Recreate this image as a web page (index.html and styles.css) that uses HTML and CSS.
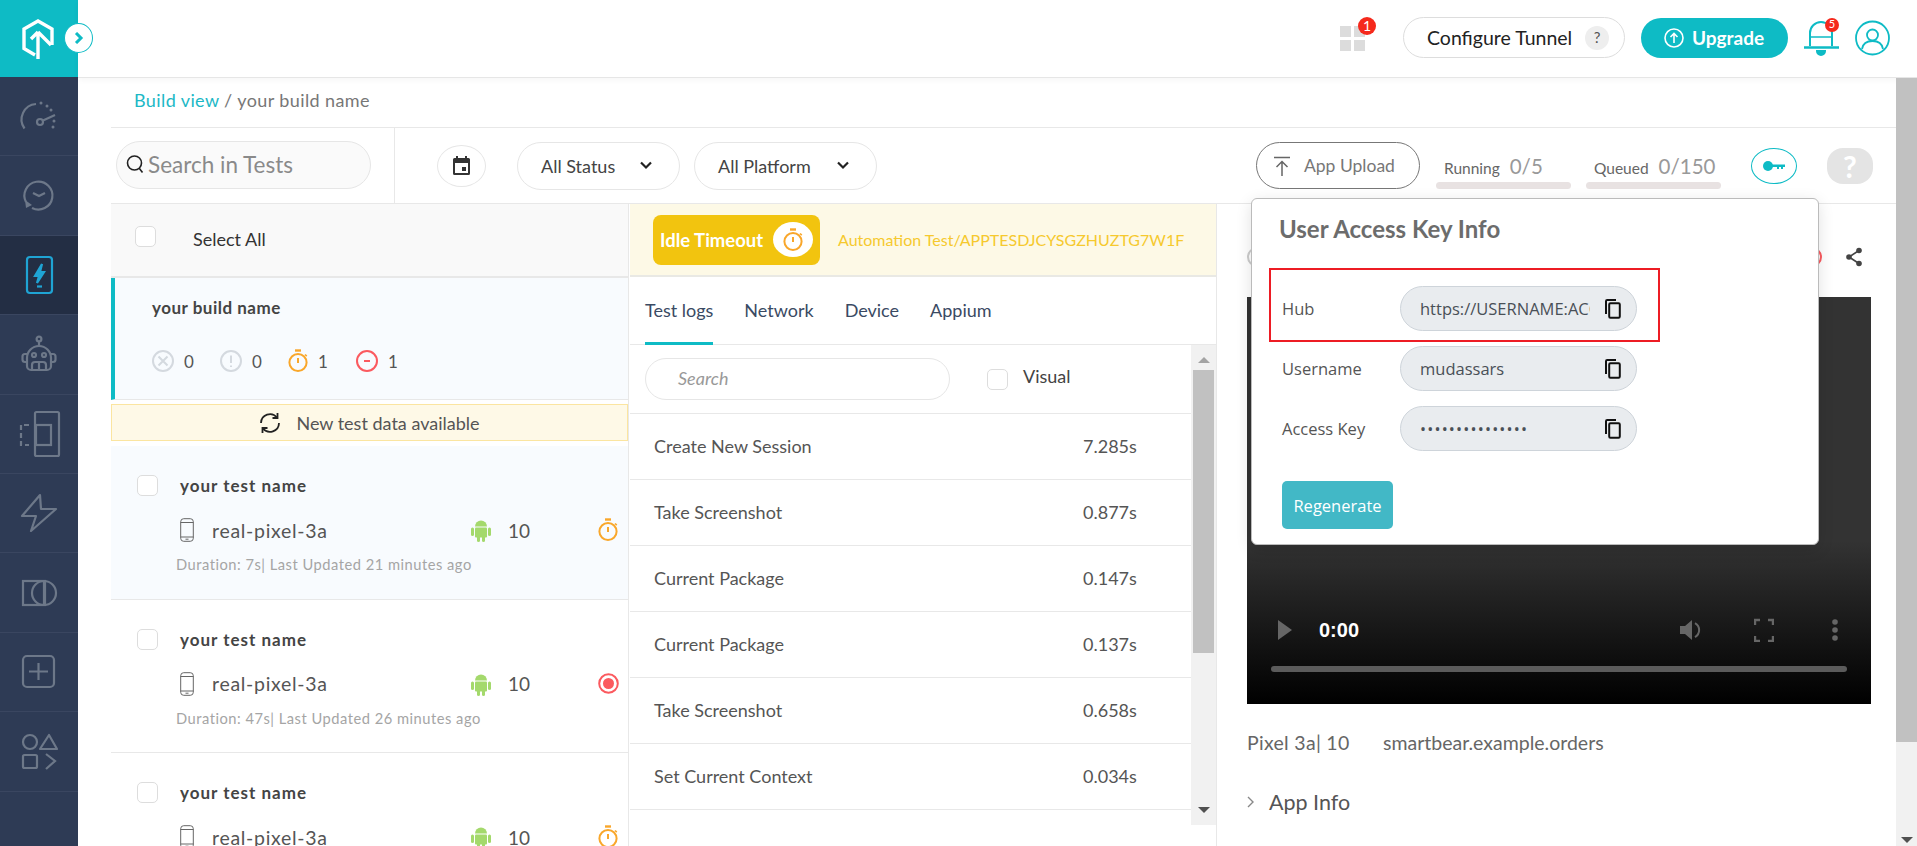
FILE: index.html
```html
<!DOCTYPE html>
<html lang="en">
<head>
    <meta charset="UTF-8">
    <meta name="viewport" content="width=device-width, initial-scale=1.0">
    <title>App Automation - Build view</title>
    <link rel="stylesheet" href="styles.css">
</head>
<body>
    <svg class="defs" width="0" height="0">
        <symbol id="i-timer" viewBox="0 0 20 24">
            <path d="M7 1.500h6" stroke-width="2.400"/>
            <circle cx="10" cy="13.500" r="8.600"/>
            <path d="M10 9v5" stroke-width="2"/>
            <path d="M17 5.500l1.800 1.600" stroke-width="1.600"/>
        </symbol>
        <symbol id="i-phone" viewBox="0 0 14 24">
            <rect x=".7" y=".7" width="12.600" height="22.600" rx="3"/>
            <path d="M.7 4.500h12.600M.7 19h12.600M5.500 21.200h3"/>
        </symbol>
        <symbol id="i-android" viewBox="0 0 20 24">
            <path d="M4 8.500a6 6 0 0 1 12 0z"/>
            <rect x="4" y="9.500" width="12" height="10" rx="1"/>
            <rect x="0" y="9.500" width="3" height="8.500" rx="1.500"/>
            <rect x="17" y="9.500" width="3" height="8.500" rx="1.500"/>
            <rect x="6" y="17" width="3" height="7" rx="1.500"/>
            <rect x="11" y="17" width="3" height="7" rx="1.500"/>
        </symbol>
        <symbol id="i-copy" viewBox="0 0 16 20">
            <path d="M1 15V2.200C1 1.500 1.500 1 2.200 1H11" />
            <rect x="4.200" y="4.200" width="10.600" height="14.600" rx="1.200"/>
        </symbol>
    </svg>

    <div class="app">
        <aside class="sidebar">
            <div class="side-logo">
                <svg width="34" height="42" viewBox="0 0 34 42" fill="none" stroke="#fff" stroke-width="3.400">
                    <path d="M14 37L3 30.500V11L17 3l14 8v16"/>
                    <path d="M17 41V14M17 14l-7 7M17 14l13 13"/>
                </svg>
            </div>
            <div class="side-item">
                <svg class="side-icon" viewBox="0 0 40 40">
                    <path d="M5.500 32.500A15.500 15.500 0 0 1 17 8"/>
                    <circle cx="21" cy="26" r="3"/>
                    <path d="M24 24.500l12-5.500"/>
                    <path class="dots" d="M22 7v.1M28 10v.1M32 14v.1M35 25v.1M34 31v.1"/>
                </svg>
            </div>
            <div class="side-item">
                <svg class="side-icon" viewBox="0 0 40 40">
                    <path d="M7 26A14 14 0 1 1 13 32"/>
                    <path class="arrow-fill" d="M6 24l7 5-6 3z"/>
                    <path d="M14 17l6 3 6-3"/>
                </svg>
            </div>
            <div class="side-item side-active">
                <svg class="side-icon icon-active" viewBox="0 0 40 40">
                    <rect x="8" y="2" width="25" height="36" rx="3"/>
                    <path class="bolt" d="M23 9l-7 12h4l-2 7 7-11h-4z"/>
                    <path d="M18 31.500h5"/>
                </svg>
            </div>
            <div class="side-item">
                <svg class="side-icon" viewBox="0 0 40 40">
                    <circle cx="20" cy="5" r="2.400"/>
                    <path d="M20 8v4"/>
                    <path d="M8 24a12 12 0 0 1 24 0v8a4 4 0 0 1-4 4H12a4 4 0 0 1-4-4z"/>
                    <path d="M8 20H6a2.500 2.500 0 0 0-2.500 2.500v3A2.500 2.500 0 0 0 6 28h2M32 20h2a2.500 2.500 0 0 1 2.500 2.500v3A2.500 2.500 0 0 1 34 28h-2"/>
                    <circle cx="15" cy="21" r="2"/>
                    <circle cx="25" cy="21" r="2"/>
                    <path d="M13 36v-5a3 3 0 0 1 3-3h8a3 3 0 0 1 3 3v5M20 28v8"/>
                </svg>
            </div>
            <div class="side-item">
                <svg class="side-icon" viewBox="0 0 40 40">
                    <rect x="16" y="-2" width="24" height="44" rx="1.500"/>
                    <rect x="17" y="11" width="15" height="20"/>
                    <path d="M10 11H2v20h8" stroke-dasharray="5 3"/>
                </svg>
            </div>
            <div class="side-item">
                <svg class="side-icon" viewBox="0 0 40 40">
                    <path d="M21 2L3 23h14l-5 15 25-22H22z" stroke-linejoin="round"/>
                </svg>
            </div>
            <div class="side-item">
                <svg class="side-icon" viewBox="0 0 40 40">
                    <rect x="4" y="8" width="22" height="24"/>
                    <circle cx="25" cy="20" r="12"/>
                    <path d="M25 8v24"/>
                </svg>
            </div>
            <div class="side-item">
                <svg class="side-icon" viewBox="0 0 40 40">
                    <rect x="4" y="4" width="31" height="31" rx="4"/>
                    <path d="M19.500 11v17M10 19.500h19"/>
                </svg>
            </div>
            <div class="side-item">
                <svg class="side-icon" viewBox="0 0 40 40">
                    <circle cx="11" cy="11" r="7"/>
                    <path d="M30 4l8 14H21z" stroke-linejoin="round"/>
                    <rect x="4" y="24" width="14" height="13" rx="1.500"/>
                    <path d="M27 23l9 7-9 8"/>
                </svg>
            </div>
        </aside>

        <button class="side-toggle">
            <svg width="10" height="12" viewBox="0 0 10 12" fill="none" stroke="#0ebbc5" stroke-width="3"><path d="M2 1l5 5-5 5"/></svg>
        </button>

        <div class="main">
            <header class="topbar">
                <div class="grid-icon">
                    <i></i><i></i><i></i><i></i>
                    <span class="count-badge">1</span>
                </div>
                <button class="tunnel-btn">Configure Tunnel <span class="tunnel-help">?</span></button>
                <button class="upgrade-btn">
                    <svg width="20" height="20" viewBox="0 0 20 20" fill="none" stroke="#fff" stroke-width="1.600">
                        <circle cx="10" cy="10" r="9"/>
                        <path d="M10 15V6M6.500 9L10 5.500 13.500 9"/>
                    </svg>
                    Upgrade
                </button>
                <div class="bell">
                    <svg width="37" height="36" viewBox="0 0 37 36" fill="none" stroke="#0ebbc5" stroke-width="2">
                        <path d="M7 26V13a11 11 0 0 1 22 0v13"/>
                        <path d="M7 17h22" stroke-width="1.500"/>
                        <path d="M1 27.500h35" stroke-width="2.400"/>
                        <path d="M14 31h8a4 4 0 0 1-8 0z" fill="#0ebbc5"/>
                    </svg>
                    <span class="bell-badge">5</span>
                </div>
                <svg class="avatar" width="35" height="36" viewBox="0 0 35 36" fill="none" stroke="#0ebbc5" stroke-width="1.800">
                    <circle cx="17.500" cy="18" r="16.500"/>
                    <circle cx="17.500" cy="15" r="5.500"/>
                    <path d="M7 29c1-6 5-8 10.500-8S27 23 28 29"/>
                </svg>
            </header>

            <div class="page">
                <div class="page-body">
                    <div class="breadcrumb"><a class="crumb-link">Build view</a> / your build name</div>

                    <div class="toolbar">
                        <div class="toolbar-search">
                            <div class="search-pill">
                                <svg width="18" height="20" viewBox="0 0 18 20" fill="none" stroke="#222" stroke-width="1.600">
                                    <circle cx="8.500" cy="9" r="7"/>
                                    <path d="M13 14l3.500 4.500"/>
                                </svg>
                                <span>Search in Tests</span>
                            </div>
                        </div>
                        <div class="toolbar-filters">
                            <button class="calendar-btn">
                                <svg width="17" height="19" viewBox="0 0 17 19">
                                    <path fill="#333" d="M3 0h2v2h7V0h2v2h1.500A1.500 1.500 0 0 1 17 3.500v14a1.500 1.500 0 0 1-1.500 1.500h-14A1.500 1.500 0 0 1 0 17.500v-14A1.500 1.500 0 0 1 1.500 2H3zM2 7v10h13V7z"/>
                                    <rect fill="#333" x="9" y="11" width="4" height="4"/>
                                </svg>
                            </button>
                            <div class="select select-status">All Status
                                <svg class="caret" width="14" height="9" viewBox="0 0 14 9" fill="none" stroke="#222" stroke-width="2.200"><path d="M2 1.500l5 5 5-5"/></svg>
                            </div>
                            <div class="select select-platform">All Platform
                                <svg class="caret" width="14" height="9" viewBox="0 0 14 9" fill="none" stroke="#222" stroke-width="2.200"><path d="M2 1.500l5 5 5-5"/></svg>
                            </div>
                            <button class="upload-btn">
                                <svg width="16" height="20" viewBox="0 0 16 20" fill="none" stroke="#666" stroke-width="1.500">
                                    <path d="M0 1.500h16M8 20V6M2.500 11L8 5.500l5.500 5.500"/>
                                </svg>
                                App Upload
                            </button>
                            <div class="meter">
                                <div class="meter-text">Running <b>0/5</b></div>
                                <div class="meter-bar"></div>
                            </div>
                            <div class="meter">
                                <div class="meter-text">Queued <b>0/150</b></div>
                                <div class="meter-bar"></div>
                            </div>
                            <button class="key-btn">
                                <svg width="22" height="10" viewBox="0 0 22 10" fill="#0ebbc5">
                                    <circle cx="5" cy="5" r="5"/>
                                    <path d="M8 3.500h14v2.500h-2v2h-2V6h-2v2h-2V6H8z"/>
                                </svg>
                            </button>
                            <button class="help-btn">?</button>
                        </div>
                    </div>

                    <div class="panels">
                        <section class="list-panel">
                            <div class="select-all">
                                <span class="check"></span>
                                <span>Select All</span>
                            </div>
                            <div class="build-item">
                                <div class="build-name">your build name</div>
                                <div class="build-stats">
                                    <span class="stat">
                                        <svg width="22" height="22" viewBox="0 0 22 22" fill="none" stroke="#d4d9df" stroke-width="2">
                                            <circle cx="11" cy="11" r="10"/>
                                            <path d="M6.500 6.500l9 9M15.500 6.500l-9 9"/>
                                        </svg>0
                                    </span>
                                    <span class="stat">
                                        <svg width="22" height="22" viewBox="0 0 22 22" fill="none" stroke="#d4d9df" stroke-width="2">
                                            <circle cx="11" cy="11" r="10"/>
                                            <path d="M11 5.500v7.500M11 15.500v1.500"/>
                                        </svg>0
                                    </span>
                                    <span class="stat">
                                        <svg class="icon-timer" width="20" height="24"><use href="#i-timer"/></svg>1
                                    </span>
                                    <span class="stat">
                                        <svg width="22" height="22" viewBox="0 0 22 22" fill="none" stroke="#fb5a5f" stroke-width="2">
                                            <circle cx="11" cy="11" r="10"/>
                                            <path d="M8 11h6"/>
                                        </svg>1
                                    </span>
                                </div>
                            </div>
                            <div class="new-data">
                                <svg width="22" height="22" viewBox="0 0 22 22" fill="none" stroke="#222" stroke-width="1.800">
                                    <path d="M2 11a9 9 0 0 1 16-5.500M20 11a9 9 0 0 1-16 5.500"/>
                                    <path d="M18.500 1v5h-5M3.500 21v-5h5"/>
                                </svg>
                                New test data available
                            </div>
                            <div class="test-item test-item-hover">
                                <div class="test-head"><span class="check"></span><span class="test-name">your test name</span></div>
                                <div class="test-row">
                                    <svg class="icon-phone" width="14" height="24"><use href="#i-phone"/></svg>
                                    <span class="device-name">real-pixel-3a</span>
                                    <svg class="icon-android" width="20" height="24"><use href="#i-android"/></svg>
                                    <span class="os-version">10</span>
                                    <svg class="icon-timer test-status" width="20" height="24"><use href="#i-timer"/></svg>
                                </div>
                                <div class="test-meta">Duration: 7s| Last Updated 21 minutes ago</div>
                            </div>
                            <div class="test-item">
                                <div class="test-head"><span class="check"></span><span class="test-name">your test name</span></div>
                                <div class="test-row">
                                    <svg class="icon-phone" width="14" height="24"><use href="#i-phone"/></svg>
                                    <span class="device-name">real-pixel-3a</span>
                                    <svg class="icon-android" width="20" height="24"><use href="#i-android"/></svg>
                                    <span class="os-version">10</span>
                                    <svg class="test-status" width="21" height="21" viewBox="0 0 21 21">
                                        <circle cx="10.500" cy="10.500" r="9.300" fill="none" stroke="#fb5a5f" stroke-width="2"/>
                                        <circle cx="10.500" cy="10.500" r="5.500" fill="#fb5a5f"/>
                                    </svg>
                                </div>
                                <div class="test-meta">Duration: 47s| Last Updated 26 minutes ago</div>
                            </div>
                            <div class="test-item">
                                <div class="test-head"><span class="check"></span><span class="test-name">your test name</span></div>
                                <div class="test-row">
                                    <svg class="icon-phone" width="14" height="24"><use href="#i-phone"/></svg>
                                    <span class="device-name">real-pixel-3a</span>
                                    <svg class="icon-android" width="20" height="24"><use href="#i-android"/></svg>
                                    <span class="os-version">10</span>
                                    <svg class="icon-timer test-status" width="20" height="24"><use href="#i-timer"/></svg>
                                </div>
                            </div>
                        </section>

                        <section class="logs-panel">
                            <div class="idle-bar">
                                <div class="idle-badge">
                                    Idle Timeout
                                    <span class="idle-circle">
                                        <svg class="icon-timer" width="20" height="24"><use href="#i-timer"/></svg>
                                    </span>
                                </div>
                                <span class="idle-path">Automation Test/APPTESDJCYSGZHUZTG7W1F</span>
                            </div>
                            <nav class="tabs">
                                <a class="tab tab-active">Test logs</a>
                                <a class="tab">Network</a>
                                <a class="tab">Device</a>
                                <a class="tab">Appium</a>
                            </nav>
                            <div class="logs-body">
                                <div class="logs-content">
                                    <div class="logs-filter">
                                        <div class="logs-search">Search</div>
                                        <span class="check"></span>
                                        <span class="visual-label">Visual</span>
                                    </div>
                                    <div class="log-row"><span>Create New Session</span><span class="log-time">7.285s</span></div>
                                    <div class="log-row"><span>Take Screenshot</span><span class="log-time">0.877s</span></div>
                                    <div class="log-row"><span>Current Package</span><span class="log-time">0.147s</span></div>
                                    <div class="log-row"><span>Current Package</span><span class="log-time">0.137s</span></div>
                                    <div class="log-row"><span>Take Screenshot</span><span class="log-time">0.658s</span></div>
                                    <div class="log-row"><span>Set Current Context</span><span class="log-time">0.034s</span></div>
                                </div>
                                <div class="logs-scroll">
                                    <span class="arrow-up"></span>
                                    <span class="logs-thumb"></span>
                                    <span class="arrow-down"></span>
                                </div>
                            </div>
                        </section>

                        <section class="video-panel">
                            <div class="video-head">
                                <span class="peek-grey"></span>
                                <span class="peek-red"></span>
                                <svg width="16" height="20" viewBox="0 0 16 20" fill="#444">
                                    <circle cx="13" cy="3.500" r="2.800"/>
                                    <circle cx="3" cy="10" r="2.800"/>
                                    <circle cx="13" cy="16.500" r="2.800"/>
                                    <path d="M3 10l10-6.500M3 10l10 6.500" stroke="#444" stroke-width="1.600"/>
                                </svg>
                            </div>
                            <div class="video">
                                <div class="video-controls">
                                    <span class="play"></span>
                                    <span class="video-time">0:00</span>
                                    <svg class="vol" width="24" height="24" viewBox="0 0 24 24" fill="#666">
                                        <path d="M1 8h5l7-6v20l-7-6H1z"/>
                                        <path d="M16 5a8 8 0 0 1 0 14" fill="none" stroke="#666" stroke-width="2"/>
                                    </svg>
                                    <svg class="full" width="20" height="24" viewBox="0 0 20 24" fill="none" stroke="#666" stroke-width="2.400">
                                        <path d="M1 7V2h5M14 2h5v5M19 18v5h-5M6 23H1v-5"/>
                                    </svg>
                                    <svg class="more" width="8" height="24" viewBox="0 0 8 24" fill="#666">
                                        <circle cx="4" cy="4" r="2.800"/>
                                        <circle cx="4" cy="12" r="2.800"/>
                                        <circle cx="4" cy="20" r="2.800"/>
                                    </svg>
                                </div>
                                <div class="video-progress"></div>
                            </div>
                            <div class="video-info"><span class="device-label">Pixel 3a| 10</span><span>smartbear.example.orders</span></div>
                            <div class="app-info">
                                <svg width="8" height="12" viewBox="0 0 8 12" fill="none" stroke="#888" stroke-width="1.400"><path d="M1 1l5 5-5 5"/></svg>
                                App Info
                            </div>
                        </section>

                        <div class="key-popover">
                            <h3 class="key-title">User Access Key Info</h3>
                            <div class="key-highlight"></div>
                            <div class="key-row">
                                <label>Hub</label>
                                <div class="key-field"><span class="key-value">https://USERNAME:ACCESSKEY@hub</span><svg class="icon-copy" width="16" height="20"><use href="#i-copy"/></svg></div>
                            </div>
                            <div class="key-row">
                                <label>Username</label>
                                <div class="key-field"><span class="key-value">mudassars</span><svg class="icon-copy" width="16" height="20"><use href="#i-copy"/></svg></div>
                            </div>
                            <div class="key-row">
                                <label>Access Key</label>
                                <div class="key-field"><span class="key-value key-dots">•••••••••••••••</span><svg class="icon-copy" width="16" height="20"><use href="#i-copy"/></svg></div>
                            </div>
                            <button class="regen-btn">Regenerate</button>
                        </div>
                    </div>
                </div>

                <div class="page-scroll">
                    <span class="page-thumb"></span>
                    <span class="arrow-down"></span>
                </div>
            </div>
        </div>
    </div>
</body>
</html>
```

FILE: styles.css
```css
* {
    box-sizing: border-box;
}
html, body {
    margin: 0;
    height: 846px;
    overflow: hidden;
}
body {
    font-family: Lato, "Open Sans", sans-serif;
    font-size: 18px;
    color: #444;
    background-color: #fff;
}
button {
    font-family: inherit;
    cursor: pointer;
}
.defs {
    position: absolute;
}
.app {
    display: flex;
    height: 846px;
    position: relative;
}

/* sidebar */
.sidebar {
    width: 78px;
    flex: none;
    background-color: #2e3b55;
}
.side-logo {
    height: 77px;
    background-color: #0ebbc5;
    display: flex;
    align-items: center;
    justify-content: center;
    padding-right: 2px;
}
.side-item {
    height: 79.4px;
    border-bottom: 1px solid #3a4660;
    display: flex;
    align-items: center;
    justify-content: center;
}
.side-active {
    background-color: #232e44;
}
.side-icon {
    width: 40px;
    height: 40px;
    fill: none;
    stroke: #6d7889;
    stroke-width: 2.200;
    overflow: visible;
}
.side-icon .dots {
    stroke-width: 3;
    stroke-linecap: round;
}
.side-icon .arrow-fill {
    fill: #6d7889;
    stroke: none;
}
.icon-active {
    stroke: #1fa4d4;
}
.icon-active .bolt {
    fill: #1fa4d4;
}
.side-toggle {
    position: absolute;
    left: 64px;
    top: 23px;
    width: 29px;
    height: 30px;
    border-radius: 50%;
    border: 1px solid #0ebbc5;
    background-color: #fff;
    padding: 0;
    display: flex;
    align-items: center;
    justify-content: center;
}

/* top bar */
.main {
    flex: 1;
    min-width: 0;
    display: flex;
    flex-direction: column;
}
.topbar {
    height: 78px;
    flex: none;
    border-bottom: 1px solid #e6e6e6;
    box-shadow: 0 2px 6px rgba(0, 0, 0, .04);
    display: flex;
    align-items: center;
    justify-content: flex-end;
    padding: 0 27px 2px 0;
}
.grid-icon {
    display: grid;
    grid-template-columns: 11px 11px;
    gap: 3px;
    position: relative;
    margin: 2px 38px 0 0;
}
.grid-icon i {
    height: 11px;
    background-color: #dcdcdc;
}
.count-badge {
    position: absolute;
    right: -11px;
    top: -9px;
    width: 18px;
    height: 18px;
    border-radius: 50%;
    background-color: #f5291c;
    color: #fff;
    font-size: 14px;
    line-height: 18px;
    text-align: center;
}
.tunnel-btn {
    width: 222px;
    height: 41px;
    border: 1px solid #ddd;
    border-radius: 21px;
    background-color: #fff;
    color: #222;
    font-size: 19.500px;
    display: flex;
    align-items: center;
    justify-content: space-between;
    padding: 0 15px 0 23px;
    margin-right: 16px;
}
.tunnel-help {
    width: 24px;
    height: 24px;
    border-radius: 50%;
    background-color: #eee;
    color: #555;
    font-size: 15px;
    line-height: 22px;
}
.upgrade-btn {
    width: 147px;
    height: 40px;
    border: none;
    border-radius: 20px;
    background-color: #0ebbc5;
    color: #fff;
    font-size: 19px;
    font-weight: 700;
    display: flex;
    align-items: center;
    gap: 8px;
    padding: 0 0 0 23px;
    margin-right: 15px;
}
.bell {
    position: relative;
    height: 36px;
    margin-right: 15px;
}
.bell-badge {
    position: absolute;
    left: 22px;
    top: -2px;
    width: 14px;
    height: 14px;
    border-radius: 50%;
    background-color: #f5291c;
    color: #fff;
    font-size: 11px;
    line-height: 12px;
    text-align: center;
}

/* page */
.page {
    flex: 1;
    min-height: 0;
    display: flex;
}
.page-body {
    flex: 1;
    min-width: 0;
    padding-left: 33px;
    position: relative;
}
.page-scroll {
    width: 21px;
    flex: none;
    background-color: #f1f1f1;
    display: flex;
    flex-direction: column;
    align-items: center;
    justify-content: space-between;
}
.page-thumb {
    width: 21px;
    height: 664px;
    background-color: #c1c1c1;
}
.arrow-up, .arrow-down {
    width: 0;
    height: 0;
    border-left: 6px solid transparent;
    border-right: 6px solid transparent;
}
.arrow-up {
    border-bottom: 6px solid #a3a3a3;
}
.arrow-down {
    border-top: 6px solid #505050;
    margin-bottom: 3px;
}
.breadcrumb {
    height: 50px;
    border-bottom: 1px solid #e8e8e8;
    padding: 11px 0 0 23px;
    color: #777;
    letter-spacing: .4px;
}
.crumb-link {
    color: #1cb8c6;
}

/* toolbar */
.toolbar {
    height: 76px;
    border-bottom: 1px solid #e8e8e8;
    display: flex;
}
.toolbar-search {
    width: 284px;
    flex: none;
    border-right: 1px solid #e8e8e8;
    padding: 13px 0 0 5px;
}
.search-pill {
    width: 255px;
    height: 48px;
    border: 1px solid #e6e6e6;
    border-radius: 24px;
    background-color: #fafafa;
    display: flex;
    align-items: center;
    gap: 4px;
    padding: 0 0 2px 9px;
    font-size: 22.500px;
    color: #8a8a8a;
}
.toolbar-filters {
    flex: 1;
    display: flex;
    align-items: center;
    padding-left: 42px;
}
.calendar-btn {
    width: 49px;
    height: 42px;
    border: 1px solid #e6e6e6;
    border-radius: 50%;
    background-color: #fff;
    margin-right: 31px;
    padding: 2px 0 0;
}
.select {
    height: 48px;
    border: 1px solid #e6e6e6;
    border-radius: 24px;
    background-color: #fff;
    color: #444;
    display: flex;
    align-items: center;
    justify-content: space-between;
    padding: 0 26px 0 23px;
}
.select-status {
    width: 163px;
    margin-right: 14px;
}
.select-platform {
    width: 183px;
    margin-right: 379px;
}
.upload-btn {
    width: 164px;
    height: 47px;
    border: 1px solid #777;
    border-radius: 24px;
    background-color: #fff;
    color: #777;
    font-size: 17.500px;
    display: flex;
    align-items: center;
    gap: 14px;
    padding: 0 0 0 17px;
    margin-right: 16px;
}
.meter {
    width: 135px;
    margin-right: 15px;
    align-self: flex-start;
    padding-top: 26px;
}
.meter-text {
    font-size: 15.500px;
    color: #666;
    padding-left: 8px;
    height: 28px;
    white-space: nowrap;
}
.meter-text b {
    font-size: 20.500px;
    font-weight: 400;
    color: #999;
    margin-left: 6px;
}
.meter-bar {
    height: 7px;
    border-radius: 4px;
    background-color: #e8e2e2;
}
.key-btn {
    width: 46px;
    height: 36px;
    border: 1px solid #0ebbc5;
    border-radius: 50%;
    background-color: #fff;
    margin: 0 30px 0 15px;
    padding: 0;
}
.help-btn {
    width: 46px;
    height: 36px;
    border: none;
    border-radius: 16px;
    background-color: #e4e4e4;
    color: #fff;
    font-size: 30px;
    line-height: 36px;
    font-weight: 700;
    padding: 0;
}

/* panels */
.panels {
    display: flex;
    height: 642px;
    overflow: hidden;
}
.list-panel {
    width: 518px;
    flex: none;
    border-right: 1px solid #e8e8e8;
}
.check {
    display: block;
    width: 21px;
    height: 21px;
    flex: none;
    border: 1px solid #ddd;
    border-radius: 5px;
    background-color: #fff;
}
.select-all {
    height: 74px;
    background-color: #f9f9f9;
    border-bottom: 2px solid #e8e8e8;
    display: flex;
    align-items: center;
    gap: 37px;
    padding: 0 0 3px 24px;
    color: #333;
}
.select-all .check {
    margin-top: -5px;
}
.build-item {
    height: 122px;
    background-color: #f8fbfe;
    border-left: 4px solid #0ebbc5;
    border-bottom: 1px solid #e8e8e8;
    padding: 19px 0 0 37px;
}
.build-name {
    font-weight: 700;
    font-size: 17px;
    letter-spacing: .5px;
    color: #444;
}
.build-stats {
    display: flex;
    margin: 31px 0 0 0;
}
.stat {
    width: 68px;
    display: flex;
    align-items: center;
    gap: 10px;
    color: #555;
    font-size: 17px;
    letter-spacing: 1px;
}
.icon-timer {
    fill: none;
    stroke: #f9a72b;
    stroke-width: 2;
}
.new-data {
    height: 37px;
    margin-top: 4px;
    background-color: #fef9e7;
    border: 1px solid #fbe5a0;
    display: flex;
    align-items: center;
    justify-content: center;
    gap: 15px;
    color: #555;
}
.test-item {
    height: 153.500px;
    border-bottom: 1px solid #e8e8e8;
    padding: 29px 0 0 26px;
    position: relative;
}
.test-item-hover {
    margin-top: 5px;
    background-color: #f8fbfe;
}
.test-head {
    display: flex;
    align-items: center;
    gap: 22px;
}
.test-name {
    font-weight: 700;
    font-size: 17px;
    letter-spacing: 1px;
    color: #444;
}
.test-row {
    display: flex;
    align-items: center;
    margin: 20px 0 0 43px;
    height: 28px;
}
.icon-phone {
    fill: none;
    stroke: #666;
    stroke-width: 1;
    flex: none;
}
.device-name {
    width: 259px;
    margin-left: 18px;
    font-size: 19.500px;
    letter-spacing: .7px;
    color: #555;
}
.icon-android {
    fill: #a4d96c;
    flex: none;
}
.os-version {
    width: 90px;
    margin-left: 17px;
    font-size: 19px;
    color: #555;
}
.test-status {
    flex: none;
}
.test-meta {
    margin: 11px 0 0 39px;
    font-size: 14.700px;
    letter-spacing: .5px;
    color: #a5a5a5;
}

/* logs */
.logs-panel {
    width: 587px;
    flex: none;
    border-right: 1px solid #e8e8e8;
    margin-left: 1px;
}
.idle-bar {
    height: 73px;
    background-color: #fdf9e6;
    border-bottom: 2px solid #e9e9e4;
    display: flex;
    align-items: center;
    padding-left: 23px;
    gap: 18px;
}
.idle-badge {
    width: 167px;
    height: 50px;
    border-radius: 8px;
    background-color: #f2c40f;
    color: #fff;
    font-size: 18.500px;
    font-weight: 700;
    display: flex;
    align-items: center;
    justify-content: space-between;
    padding: 0 7px;
}
.idle-circle {
    width: 40px;
    height: 35px;
    border-radius: 50%;
    background-color: #fff;
    display: flex;
    align-items: center;
    justify-content: center;
}
.idle-path {
    color: #f6c92e;
    font-size: 16px;
}
.tabs {
    height: 68px;
    border-bottom: 1px solid #e8e8e8;
    display: flex;
    gap: 31px;
    padding-left: 15px;
}
.tab {
    height: 68px;
    padding-top: 22px;
    color: #3a4a63;
}
.tab-active {
    border-bottom: 3px solid #0ebbc5;
}
.logs-body {
    display: flex;
    height: 480px;
}
.logs-content {
    flex: 1;
    min-width: 0;
}
.logs-filter {
    height: 69px;
    display: flex;
    align-items: center;
    border-bottom: 1px solid #e8e8e8;
    padding-left: 15px;
}
.logs-search {
    width: 305px;
    height: 42px;
    border: 1px solid #e6e6e6;
    border-radius: 21px;
    padding: 8px 0 0 32px;
    color: #999;
    font-style: italic;
    margin-right: 37px;
}
.visual-label {
    margin: 0 0 6px 15px;
    color: #444;
}
.log-row {
    height: 66px;
    border-bottom: 1px solid #e8e8e8;
    display: flex;
    align-items: center;
    padding: 0 0 2px 24px;
    color: #555;
}
.log-row span:first-child {
    width: 429px;
}
.log-time {
    color: #555;
}
.logs-scroll {
    width: 25px;
    flex: none;
    background-color: #f1f1f1;
    display: flex;
    flex-direction: column;
    align-items: center;
    padding-top: 12px;
}
.logs-thumb {
    width: 21px;
    height: 283px;
    margin-top: 7px;
    background-color: #c1c1c1;
}
.logs-scroll .arrow-down {
    margin-top: 154px;
}

/* video */
.video-panel {
    flex: 1;
    min-width: 0;
    padding-left: 30px;
}
.video-head {
    height: 93px;
    width: 624px;
    display: flex;
    align-items: flex-start;
    padding: 43px 9px 0 0;
}
.peek-grey, .peek-red {
    width: 20px;
    height: 20px;
    border-radius: 50%;
    border: 2px solid #ccc;
}
.peek-red {
    border-color: #fb5a5f;
    margin: 0 24px 0 auto;
}
.video {
    width: 624px;
    height: 407px;
    background: linear-gradient(#333 0, #333 60%, #000 100%);
    position: relative;
}
.video-controls {
    display: flex;
    align-items: center;
    height: 24px;
    position: absolute;
    top: 321px;
    left: 24px;
    right: 24px;
}
.play {
    width: 0;
    height: 0;
    border-left: 14px solid #666;
    border-top: 10px solid transparent;
    border-bottom: 10px solid transparent;
    margin-left: 7px;
}
.video-time {
    color: #fff;
    font-family: "Liberation Sans", sans-serif;
    font-weight: 700;
    font-size: 20px;
    margin-left: 27px;
    flex: 1;
}
.vol {
    margin-right: 51px;
}
.full {
    margin-right: 57px;
}
.more {
    margin-right: 8px;
}
.video-progress {
    position: absolute;
    left: 24px;
    right: 24px;
    top: 369px;
    height: 6px;
    border-radius: 3px;
    background-color: #5b5b5b;
}
.video-info {
    display: flex;
    margin-top: 27px;
    color: #666;
    font-size: 19.500px;
}
.device-label {
    width: 136px;
    flex: none;
    letter-spacing: .3px;
}
.app-info {
    display: flex;
    align-items: center;
    gap: 14px;
    margin-top: 35px;
    color: #555;
    font-size: 21.500px;
}

/* access key popover */
.key-popover {
    position: absolute;
    left: 1173px;
    top: 120px;
    width: 568px;
    height: 347px;
    background-color: #fff;
    border: 1px solid #bbb;
    border-radius: 6px;
    box-shadow: 0 4px 16px rgba(0, 0, 0, .12);
    padding: 0 27px;
    font-family: "Open Sans", Lato, sans-serif;
    z-index: 2;
}
.key-title {
    margin: 16px 0 43px;
    font-family: Lato, sans-serif;
    font-size: 24px;
    line-height: 28px;
    font-weight: 700;
    color: #6c6c6c;
}
.key-highlight {
    position: absolute;
    left: 17px;
    top: 69px;
    width: 391px;
    height: 74px;
    border: 2px solid #ed1c24;
}
.key-row {
    display: flex;
    align-items: center;
    height: 45px;
    margin-bottom: 15px;
    font-size: 16.500px;
    color: #555;
    position: relative;
}
.key-row label {
    width: 121px;
    flex: none;
    padding-left: 3px;
    color: #555;
}
.key-field {
    width: 237px;
    height: 45px;
    border: 1px solid #ced4da;
    border-radius: 23px;
    background-color: #e9ecef;
    display: flex;
    align-items: center;
    justify-content: space-between;
    padding: 0 15px 0 19px;
}
.key-value {
    width: 170px;
    overflow: hidden;
    white-space: nowrap;
    color: #495057;
}
.key-dots {
    font-size: 16px;
    letter-spacing: 1.200px;
}
.icon-copy {
    fill: none;
    stroke: #111;
    stroke-width: 2;
    flex: none;
}
.regen-btn {
    width: 111px;
    height: 48px;
    margin: 15px 0 0 3px;
    border: none;
    border-radius: 5px;
    background-color: #42b8c6;
    color: #fff;
    font-size: 16.500px;
    font-family: "Open Sans", sans-serif;
    padding: 0;
}
```
